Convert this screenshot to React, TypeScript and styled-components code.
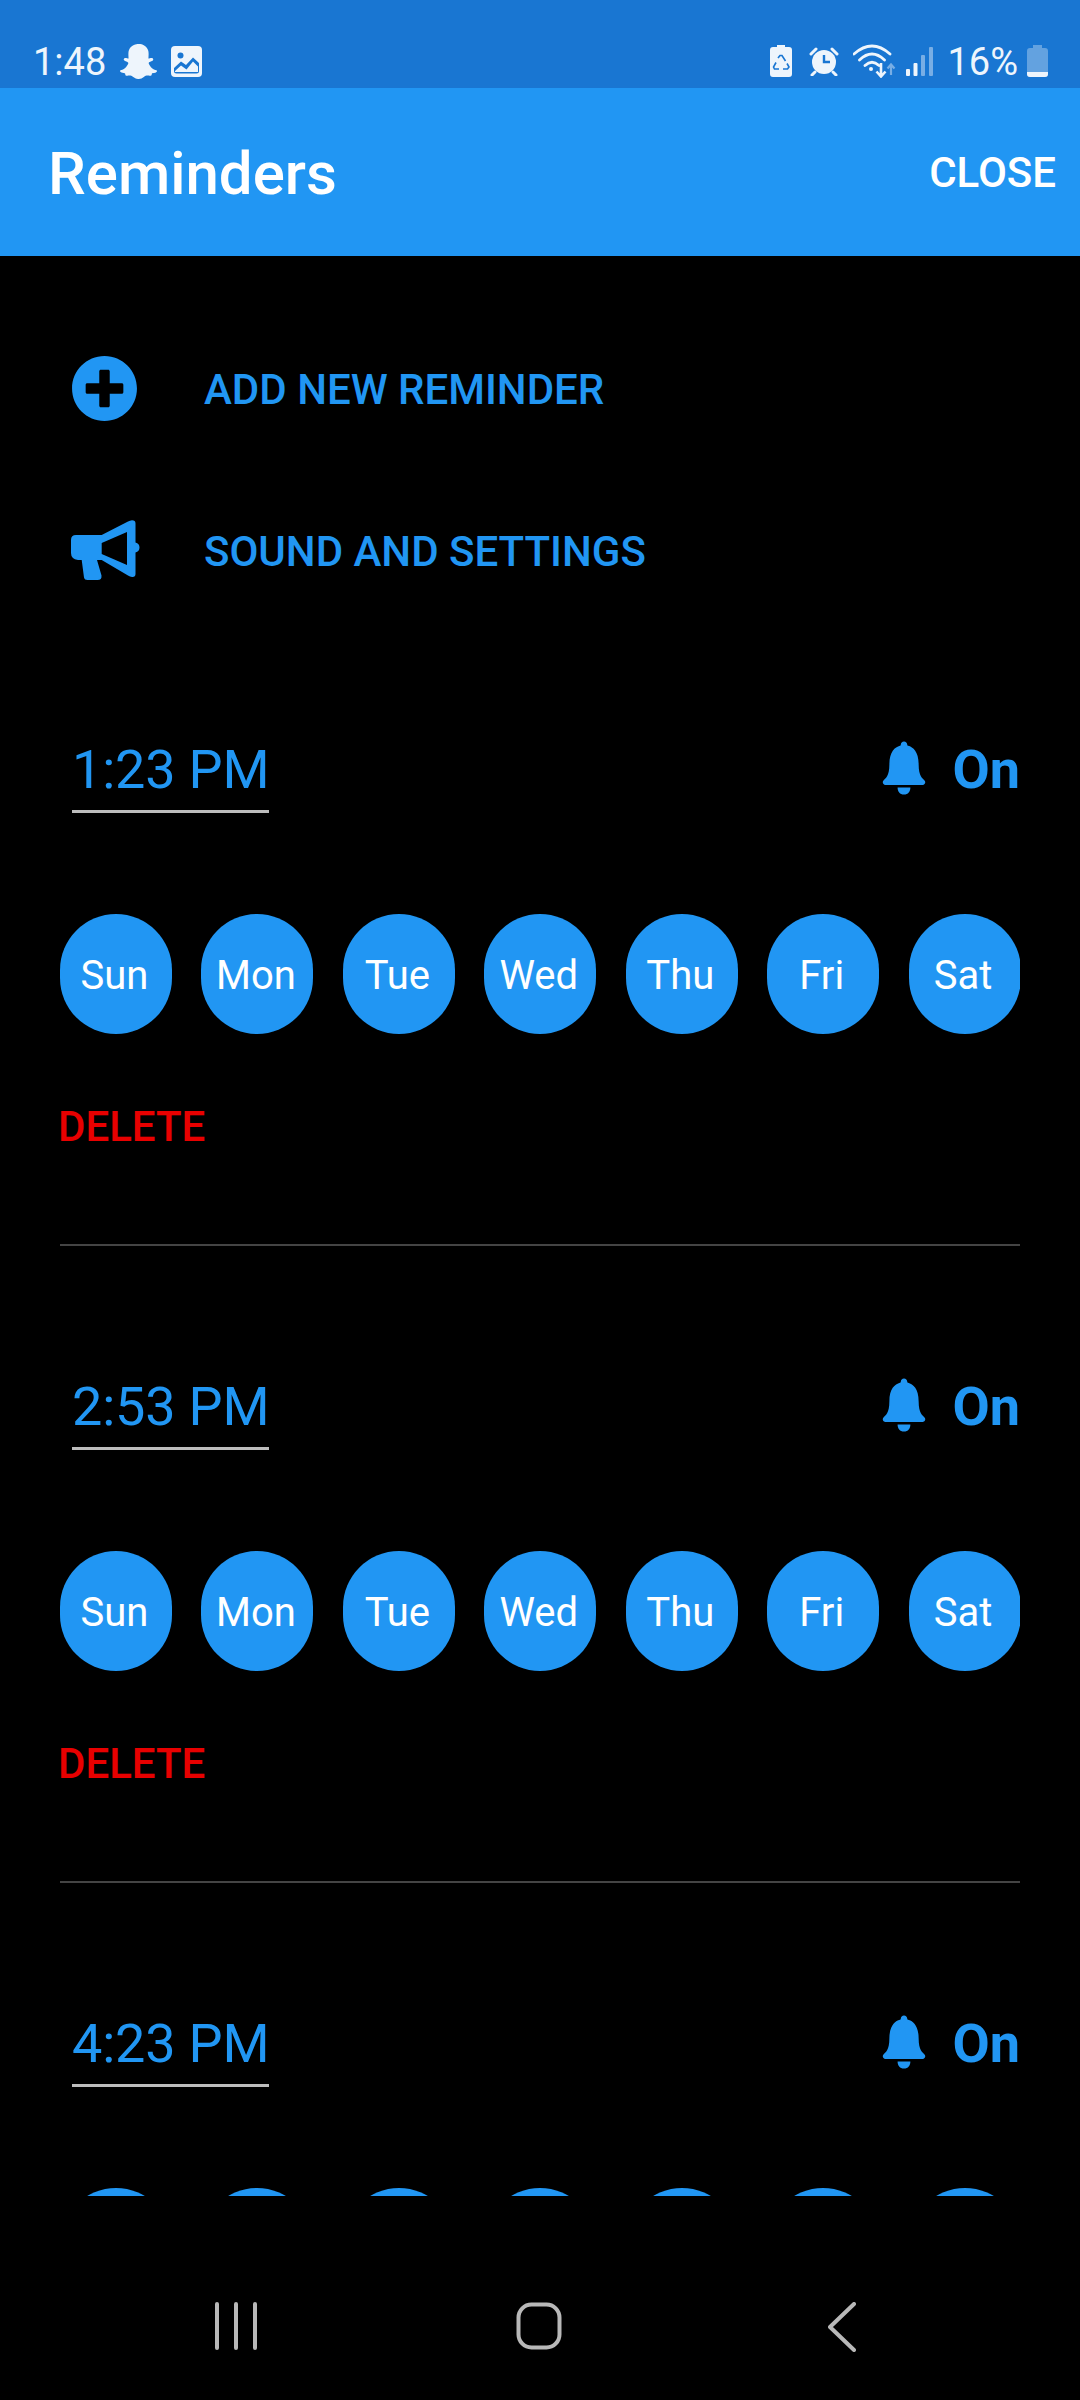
import React from "react";
import styled, { createGlobalStyle } from "styled-components";
import { FaPlusCircle, FaSnapchatGhost } from "react-icons/fa";
import { IoIosNotifications } from "react-icons/io";

const BLUE = "#2196F3";

const Global = createGlobalStyle`
  html, body { margin: 0; padding: 0; background: #000; }
  * { box-sizing: border-box; }
`;

const Screen = styled.div`
  width: 1080px;
  height: 2400px;
  display: flex;
  flex-direction: column;
  overflow: hidden;
  background: #000;
  font-family: Roboto, "Liberation Sans", sans-serif;
`;

const StatusBar = styled.div`
  height: 88px;
  flex: none;
  background: #1976d2;
  padding: 34px 32px 0 33px;
  display: flex;
  justify-content: space-between;
  color: #eef5fc;
`;

const StatusGroup = styled.div`
  height: 54px;
  display: flex;
  align-items: center;
`;

const StatusText = styled.span<{ $ml?: number }>`
  font-size: 38px;
  line-height: 54px;
  padding-top: 1px;
  margin-left: ${(p) => p.$ml ?? 0}px;
`;

const StatusIcon = styled.svg<{ $ml?: number }>`
  flex: none;
  display: block;
  margin-left: ${(p) => p.$ml ?? 0}px;
`;

const GhostWrap = styled.span`
  margin-left: 14px;
  display: flex;
  font-size: 37px;
  color: #eef5fc;
`;

const Header = styled.header`
  height: 168px;
  flex: none;
  background: ${BLUE};
  padding: 0 24px 0 48px;
  display: flex;
  align-items: center;
  justify-content: space-between;
  color: #fff;
`;

const Title = styled.h1`
  margin: 0;
  padding-top: 3px;
  font-size: 60px;
  font-weight: 500;
`;

const CloseButton = styled.span`
  font-size: 42px;
  font-weight: 500;
`;

const Scroller = styled.main`
  height: 1940px;
  flex: none;
  overflow: hidden;
`;

const Actions = styled.div`
  padding: 78px 0 5px 71px;
  display: flex;
  flex-direction: column;
  gap: 54px;
`;

const ActionRow = styled.div`
  height: 108px;
  display: flex;
  align-items: center;
  color: ${BLUE};
`;

const ActionIcon = styled.span`
  width: 133px;
  flex: none;
  display: flex;
  font-size: 67px;
`;

const ActionLabel = styled.span`
  padding-top: 3px;
  font-size: 42px;
  font-weight: 500;
`;

const Section = styled.section`
  height: 637px;
  margin: 0 60px;
  padding-top: 127px;
  border-bottom: 2px solid #444;
`;

const TimeRow = styled.div`
  display: flex;
  justify-content: space-between;
  align-items: flex-start;
`;

const TimeField = styled.div`
  margin-left: 12px;
  width: 197px;
  height: 77px;
  padding-top: 2px;
  border-bottom: 3px solid #bdbdbd;
  font-size: 54px;
  line-height: 64px;
  letter-spacing: -0.2px;
  color: ${BLUE};
  white-space: nowrap;
`;

const Toggle = styled.div`
  display: flex;
  align-items: center;
  height: 64px;
  color: ${BLUE};
`;

const BellIcon = styled.span`
  display: flex;
  font-size: 68px;
  margin-right: 15px;
`;

const ToggleLabel = styled.span`
  padding-top: 3px;
  font-size: 54px;
  font-weight: 700;
  line-height: 64px;
`;

const DayRow = styled.div`
  margin-top: 101px;
  display: flex;
  gap: 29.45px;
  overflow: hidden;
`;

const Day = styled.div`
  width: 112px;
  height: 120px;
  flex: none;
  border-radius: 56px;
  padding: 3px 3px 0 0;
  background: ${BLUE};
  color: #fff;
  font-size: 40px;
  display: flex;
  align-items: center;
  justify-content: center;
`;

const DeleteButton = styled.div`
  margin: 68px 0 0 -2px;
  font-size: 42px;
  font-weight: 500;
  line-height: 50px;
  color: #e80000;
`;

const NavBar = styled.nav`
  height: 204px;
  flex: none;
  padding: 106px 0 0 84px;
  display: grid;
  grid-template-columns: repeat(3, 303px);
  justify-items: center;
  align-items: start;
  background: #000;
`;

const DAYS = ["Sun", "Mon", "Tue", "Wed", "Thu", "Fri", "Sat"];
const TIMES = ["1:23 PM", "2:53 PM", "4:23 PM"];

const Megaphone = () => (
  <svg width="69" height="61" viewBox="0 0 69 61">
    <path
      fill={BLUE}
      fillRule="evenodd"
      d="M5 15 H30.700 L57 1.500 Q59 0.500 61 0.300 Q64.500 0.300 64.500 3.500 V22.500 Q68.500 23.500 68.500 27.500 Q68.500 31.500 64.500 32.500 V54 Q64.500 57.300 61 57 Q59 56.800 57 55.500 L30.700 40 H26 L30.500 55.500 Q31 60 26.500 60 H16.500 Q13.500 60 13 57.500 L10.700 40 H7 Q0 39 0 33 V20 Q0 15 5 15 Z M30.700 23 V34 L56 45 V12 Z"
    />
  </svg>
);

const App: React.FC = () => (
  <Screen>
    <Global />
    <StatusBar>
      <StatusGroup>
        <StatusText>1:48</StatusText>
        <GhostWrap><FaSnapchatGhost /></GhostWrap>
        <StatusIcon $ml={14} width="31" height="31" viewBox="0 0 31 31">
          <rect width="31" height="31" rx="4" fill="#eef5fc" />
          <circle cx="9.500" cy="9.500" r="3" fill="#1976d2" />
          <path d="M3 25 L3 22 L10 15.500 L15 19 L22 11.500 L28 17 L28 25 Q28 27.500 25.500 27.500 L5.500 27.500 Q3 27.500 3 25 Z" fill="#1976d2" />
          <path d="M4 25 L10 19.500 L15.500 23.500 L22 15.500 L27 20.500 L27 26 L4 26 Z" fill="#eef5fc" />
        </StatusIcon>
      </StatusGroup>
      <StatusGroup>
        <StatusIcon width="22" height="32" viewBox="0 0 22 32">
          <path d="M7 0 H15 V2 H19 Q22 2 22 5 V29 Q22 32 19 32 H3 Q0 32 0 29 V5 Q0 2 3 2 H7 Z" fill="#eef5fc" />
          <path d="M8 13 L10 10.500 H12 L15.500 16 M17 18.500 L19 22 L17.500 24 H13 M9 24 H4.500 L3.500 22 L6 17.500" stroke="#1976d2" strokeWidth="1.600" fill="none" />
        </StatusIcon>
        <StatusIcon $ml={17} width="30" height="29" viewBox="0 0 30 29">
          <circle cx="15" cy="15" r="12" fill="#eef5fc" />
          <path d="M15 8 V15 H21" stroke="#1976d2" strokeWidth="2.400" fill="none" />
          <path d="M2 7 L7 2 M28 7 L23 2 M6 25 L3 28 M24 25 L27 28" stroke="#eef5fc" strokeWidth="3" strokeLinecap="round" />
        </StatusIcon>
        <StatusIcon $ml={14} width="43" height="34" viewBox="0 0 43 34">
          <path d="M1 10 Q19 -6 37 10 M6.500 16 Q19 4 31.500 16 M12 21.500 Q19 15 26 21.500" stroke="#eef5fc" strokeWidth="2.800" fill="none" strokeLinecap="round" />
          <circle cx="18" cy="25" r="2" fill="#eef5fc" />
          <path d="M28 19 V32 M23.500 27.500 L28 32.500 L32.500 27.500" stroke="#eef5fc" strokeWidth="2.600" fill="none" />
          <path d="M38 31 V21 M34.500 24.500 L38 20.500 L41.500 24.500" stroke="#eef5fc" strokeOpacity="0.45" strokeWidth="2.200" fill="none" />
        </StatusIcon>
        <StatusIcon $ml={10} width="27" height="29" viewBox="0 0 27 29">
          <rect x="0" y="22" width="4" height="7" rx="1" fill="#eef5fc" />
          <rect x="7.500" y="16" width="4" height="13" rx="1" fill="#eef5fc" />
          <rect x="15" y="8" width="4" height="21" rx="1" fill="#eef5fc" fillOpacity="0.45" />
          <rect x="23" y="0" width="4" height="29" rx="1" fill="#eef5fc" fillOpacity="0.45" />
        </StatusIcon>
        <StatusText $ml={14}>16%</StatusText>
        <StatusIcon $ml={9} width="21" height="32" viewBox="0 0 21 32">
          <path d="M6 0 H15 V3 H18 Q21 3 21 6 V29 Q21 32 18 32 H3 Q0 32 0 29 V6 Q0 3 3 3 H6 Z" fill="#eef5fc" fillOpacity="0.35" />
          <path d="M0 27 H21 V29 Q21 32 18 32 H3 Q0 32 0 29 Z" fill="#eef5fc" />
        </StatusIcon>
      </StatusGroup>
    </StatusBar>
    <Header>
      <Title>Reminders</Title>
      <CloseButton>CLOSE</CloseButton>
    </Header>
    <Scroller>
      <Actions>
        <ActionRow>
          <ActionIcon><FaPlusCircle /></ActionIcon>
          <ActionLabel>ADD NEW REMINDER</ActionLabel>
        </ActionRow>
        <ActionRow>
          <ActionIcon><Megaphone /></ActionIcon>
          <ActionLabel>SOUND AND SETTINGS</ActionLabel>
        </ActionRow>
      </Actions>
      {TIMES.map((t) => (
        <Section key={t}>
          <TimeRow>
            <TimeField>{t}</TimeField>
            <Toggle>
              <BellIcon><IoIosNotifications /></BellIcon>
              <ToggleLabel>On</ToggleLabel>
            </Toggle>
          </TimeRow>
          <DayRow>
            {DAYS.map((d) => (
              <Day key={d}>{d}</Day>
            ))}
          </DayRow>
          <DeleteButton>DELETE</DeleteButton>
        </Section>
      ))}
    </Scroller>
    <NavBar>
      <svg width="44" height="48" viewBox="0 0 44 48">
        <path d="M3 2 V46 M22 2 V46 M41 2 V46" stroke="#b8b8b8" strokeWidth="4" strokeLinecap="round" />
      </svg>
      <svg width="46" height="48" viewBox="0 0 46 48">
        <rect x="2.500" y="2.500" width="41" height="43" rx="13" fill="none" stroke="#b8b8b8" strokeWidth="4" />
      </svg>
      <svg width="28" height="50" viewBox="0 0 28 50">
        <path d="M26 2 L2 25 L26 48" fill="none" stroke="#b8b8b8" strokeWidth="4" strokeLinecap="round" strokeLinejoin="round" />
      </svg>
    </NavBar>
  </Screen>
);

export default App;
